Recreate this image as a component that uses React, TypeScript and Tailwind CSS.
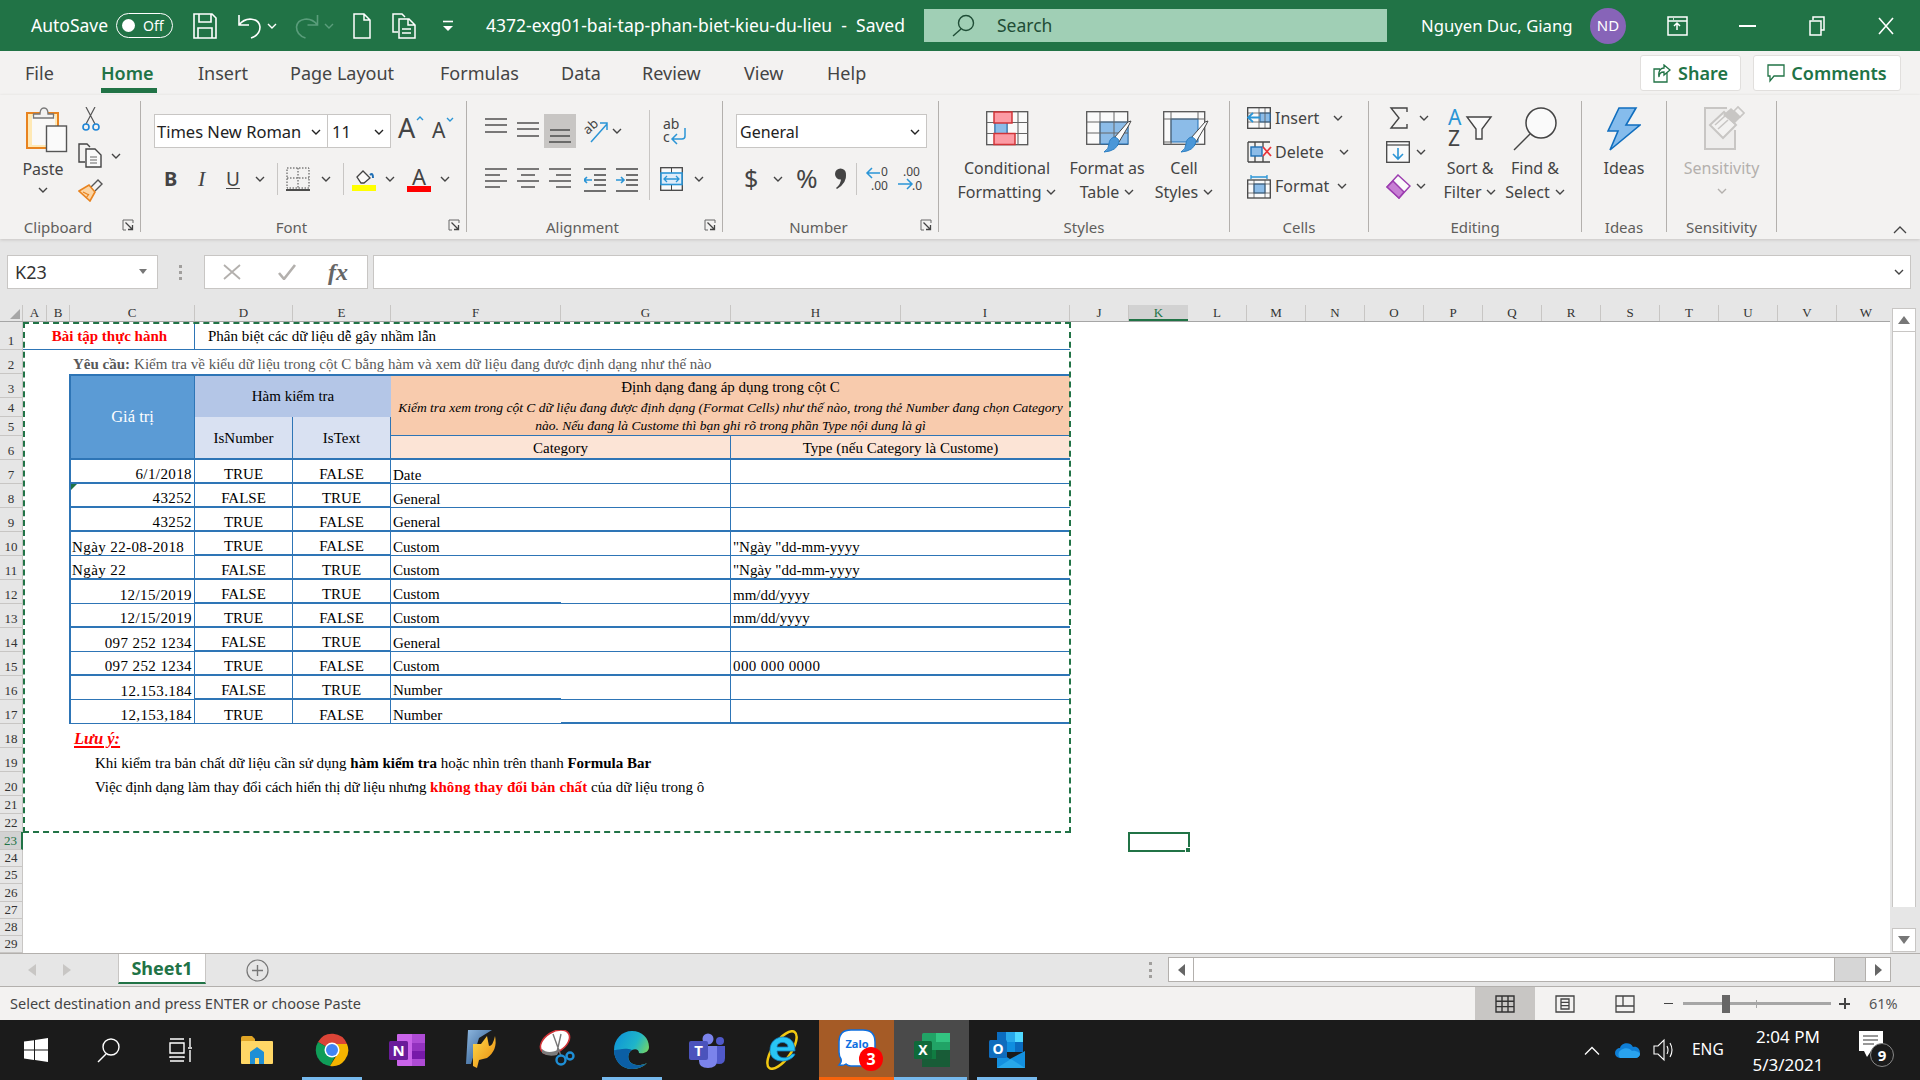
import type { ReactNode } from "react";

const blue = "border-[#2e75b6]";

function Chev({ c = "#444" }: { c?: string }) {
  return (
    <svg width="10" height="6" viewBox="0 0 10 6" className="shrink-0">
      <path d="M1 1l4 4 4-4" fill="none" stroke={c} strokeWidth="1.4" />
    </svg>
  );
}

function Launcher() {
  return (
    <svg width="12" height="12" viewBox="0 0 12 12" className="absolute right-[6px] bottom-[1px]">
      <path d="M11 4V1H1v10h3" fill="none" stroke="#666" strokeWidth="1" />
      <path d="M3.500 3.500l7 7M10.500 6v4.500H6" fill="none" stroke="#444" strokeWidth="1.3" />
    </svg>
  );
}

function Group({ w, label, launcher, children }: { w: string; label: string; launcher?: boolean; children: ReactNode }) {
  return (
    <div className={`${w} relative h-[131px] shrink-0 border-r border-[#b3b0ad]`}>
      {children}
      <div className={`absolute left-0 right-0 top-[115px] text-center text-[15px] leading-[22px] text-[#605e5c] ${launcher ? "pr-[24px]" : ""}`}>{label}</div>
      {launcher && <Launcher />}
    </div>
  );
}

function Lines({ ys, from = [] }: { ys: number[]; from?: number[][] }) {
  return (
    <svg width="22" height="34" viewBox="0 0 22 34" className="shrink-0">
      {ys.map((y, i) => (
        <path key={y} d={`M${from[i] ? from[i][0] : 0} ${y}H${from[i] ? from[i][1] : 22}`} stroke="#444" strokeWidth="1.4" />
      ))}
    </svg>
  );
}

function PasteIcon() {
  return (
    <svg width="42" height="46" viewBox="0 0 42 46">
      <rect x="1" y="6" width="31" height="35" fill="#ffe9b5" stroke="#e8831f" strokeWidth="2" />
      <rect x="6" y="9" width="23" height="29" fill="#faf9f8" />
      <path d="M7.500 11V7H14Q14 1 18 1T22 7h5.500v4z" fill="#f3f2f1" stroke="#777" strokeWidth="1.3" />
      <rect x="20.500" y="19" width="20" height="25.500" fill="#fafafa" stroke="#555" strokeWidth="1.4" />
    </svg>
  );
}
function CutIcon() {
  return (
    <svg width="18" height="24" viewBox="0 0 18 24">
      <path d="M4 0l9 17M13 0L4 17" fill="none" stroke="#555" strokeWidth="1.2" />
      <circle cx="4" cy="20" r="3" fill="none" stroke="#1f86d6" strokeWidth="1.6" />
      <circle cx="14" cy="20" r="3" fill="none" stroke="#1f86d6" strokeWidth="1.6" />
    </svg>
  );
}
function CopyIcon() {
  return (
    <svg width="24" height="25" viewBox="0 0 24 25">
      <path d="M7 19H1V1h8l3 3" fill="none" stroke="#444" strokeWidth="1.4" />
      <path d="M8 6h9l6 6v12H8z" fill="#fafafa" stroke="#444" strokeWidth="1.4" />
      <path d="M12 14h7M12 17h7M12 20h7" stroke="#666" strokeWidth="1.2" />
    </svg>
  );
}
function PainterIcon() {
  return (
    <svg width="25" height="23" viewBox="0 0 25 23">
      <path d="M13 8l7-7 4 4-7 7" fill="#f3f2f1" stroke="#555" strokeWidth="1.4" />
      <path d="M1 12l10-6 6 7-5 9z" fill="#fbd5a5" stroke="#e8831f" strokeWidth="1.6" />
      <path d="M5 13l6 3M8 19l3-4" stroke="#e8831f" strokeWidth="1.2" />
    </svg>
  );
}
function BorderIcon() {
  return (
    <svg width="24" height="24" viewBox="0 0 24 24">
      <path d="M1 1h22v20H1zM12 1v20M1 11h22" fill="none" stroke="#444" strokeWidth="1" strokeDasharray="1.500 1.500" />
      <path d="M0 23h24" stroke="#222" strokeWidth="1.6" />
    </svg>
  );
}
function FillIcon() {
  return (
    <svg width="24" height="24" viewBox="0 0 24 24">
      <path d="M5 10l6-6 7 7-6 5H9z" fill="#faf9f8" stroke="#444" strokeWidth="1.3" />
      <path d="M18 8q3-3 3 3" fill="none" stroke="#1f6fb5" strokeWidth="2" />
      <rect y="18" width="24" height="6" fill="#ffff00" />
    </svg>
  );
}
function OrientIcon() {
  return (
    <svg width="26" height="26" viewBox="0 0 26 26" className="overflow-visible">
      <text x="1" y="13" fontSize="13" fill="#444" transform="rotate(-42 8 10)" fontFamily="Noto Sans">ab</text>
      <path d="M8 24L24 6M17 5h7v7" fill="none" stroke="#2b95d6" strokeWidth="1.5" />
    </svg>
  );
}
function WrapIcon() {
  return (
    <svg width="24" height="30" viewBox="0 0 24 30" className="overflow-visible">
      <text x="0" y="13" fontSize="14" fill="#444" fontFamily="Noto Sans">ab</text>
      <text x="0" y="26" fontSize="14" fill="#444" fontFamily="Noto Sans">c</text>
      <path d="M22 12v8q0 3-3 3H10M14 18l-5 5 5 5" fill="none" stroke="#2b95d6" strokeWidth="1.5" />
    </svg>
  );
}
function IndentIcon({ inc }: { inc?: boolean }) {
  return (
    <svg width="22" height="24" viewBox="0 0 22 24">
      <path d="M0 1h22M10 7h12M10 12h12M10 17h12M0 23h22" stroke="#444" strokeWidth="1.3" />
      <path d={inc ? "M0 12h8M5 9l3 3-3 3" : "M8 12H0M3 9l-3 3 3 3"} fill="none" stroke="#2b95d6" strokeWidth="1.6" />
    </svg>
  );
}
function MergeIcon() {
  return (
    <svg width="23" height="24" viewBox="0 0 23 24">
      <rect x=".7" y=".7" width="21.600" height="22.600" fill="#fafafa" stroke="#444" strokeWidth="1.3" />
      <path d="M11.500 1v5M11.500 18v5" stroke="#444" />
      <rect x="1" y="6" width="21" height="11.500" fill="#deecf9" stroke="#2b95d6" strokeWidth="1.6" />
      <path d="M4 12h15M7 9l-3 3 3 3M16 9l3 3-3 3" fill="none" stroke="#2b95d6" strokeWidth="1.3" />
    </svg>
  );
}
function DecimalIcon({ inc }: { inc?: boolean }) {
  return (
    <svg width="25" height="26" viewBox="0 0 25 26" fontFamily="Noto Sans" fontSize="12" fill="#444" className="overflow-visible">
      {inc ? (
        <>
          <text x="5" y="10">.00</text>
          <text x="14" y="24">.0</text>
          <path d="M0 18h13M9 13l5 5-5 5" fill="none" stroke="#2b95d6" strokeWidth="1.5" />
        </>
      ) : (
        <>
          <text x="15" y="10">0</text>
          <text x="5" y="24">.00</text>
          <path d="M14 7H1M6 2L1 7l5 5" fill="none" stroke="#2b95d6" strokeWidth="1.5" />
        </>
      )}
    </svg>
  );
}
function CondIcon() {
  return (
    <svg width="43" height="36" viewBox="0 0 43 36">
      <rect x=".7" y=".7" width="41" height="33" fill="#fafafa" stroke="#555" strokeWidth="1.3" />
      <path d="M1 11.500h41M1 22.500h41M9 1v33M21 1v33M32 1v33" stroke="#666" strokeWidth="1.1" />
      <rect x="9" y="11.500" width="12" height="11" fill="#8cbce8" stroke="#1f6fb5" strokeWidth="1" />
      <rect x="8" y="1" width="18" height="11" fill="#fc9ba4" stroke="#d13438" strokeWidth="1.5" />
      <rect x="8" y="22.500" width="21" height="11" fill="#fc9ba4" stroke="#d13438" strokeWidth="1.5" />
    </svg>
  );
}
function TableBrush({ cell }: { cell?: boolean }) {
  return (
    <svg width="46" height="42" viewBox="0 0 46 42">
      <rect x=".7" y=".7" width="41" height="32.600" fill="#fafafa" stroke="#555" strokeWidth="1.3" />
      {cell ? (
        <>
          <rect x="8" y="8" width="27" height="23" fill="#8cbce8" stroke="#1f6fb5" />
          <path d="M1 8h41M1 31h8M8 1v33M35 1v7" stroke="#666" />
        </>
      ) : (
        <>
          <rect x="14" y="11" width="28" height="22" fill="#8cbce8" stroke="#1f6fb5" />
          <path d="M1 11h41M1 22h41M14 1v33M28 1v33" stroke="#666" />
        </>
      )}
      <path d="M28 27L42 11l3-1-2 4-10 17z" fill="#fafafa" stroke="#444" />
      <path d="M28 26q5 1 5 5-2 9-15 10 5-3 5-8 0-5 5-7z" fill="#4a97d8" stroke="#2b7fc3" />
    </svg>
  );
}
function InsertIcon() {
  return (
    <svg width="24" height="22" viewBox="0 0 24 22">
      <rect x=".7" y=".7" width="22.600" height="20.600" fill="#fafafa" stroke="#444" strokeWidth="1.3" />
      <rect x="13" y="6" width="10" height="9" fill="#8cbce8" stroke="#1f6fb5" />
      <path d="M1 6h23M1 15h23M12 1v20M18 1v20" stroke="#555" strokeWidth=".8" />
      <path d="M13 10.500H1M6 6l-5 4.500L6 15" fill="none" stroke="#2b95d6" strokeWidth="1.8" />
    </svg>
  );
}
function DeleteIcon() {
  return (
    <svg width="25" height="22" viewBox="0 0 25 22">
      <path d="M1 1h22M1 21h22M1 1v20M8 1v6M8 15v6M16 1v5M16 15v6" fill="none" stroke="#444" strokeWidth="1.3" />
      <rect x="4" y="6" width="11" height="9" fill="#8cbce8" stroke="#1f6fb5" strokeWidth="1.4" />
      <path d="M16 6l8 9M24 6l-8 9" stroke="#e8343a" strokeWidth="1.8" />
    </svg>
  );
}
function FormatIcon() {
  return (
    <svg width="24" height="25" viewBox="0 0 24 25">
      <path d="M4 1v4M20 1v4M4 3h16" fill="none" stroke="#2b95d6" strokeWidth="1.3" />
      <rect x=".7" y="6" width="22.600" height="18" fill="#fafafa" stroke="#444" strokeWidth="1.3" />
      <rect x="7" y="10" width="11" height="9" fill="#8cbce8" stroke="#1f6fb5" />
      <path d="M1 10h22M1 19h22M7 6v18M18 6v18" stroke="#555" strokeWidth=".8" />
    </svg>
  );
}
function SumIcon() {
  return (
    <svg width="20" height="22" viewBox="0 0 20 22">
      <path d="M18 5V1H2l8 10-8 10h16v-4" fill="none" stroke="#444" strokeWidth="1.4" />
    </svg>
  );
}
function FillDownIcon() {
  return (
    <svg width="24" height="22" viewBox="0 0 24 22">
      <rect x=".7" y=".7" width="22.600" height="20.600" fill="#fafafa" stroke="#444" strokeWidth="1.3" />
      <path d="M1 4h22" stroke="#444" strokeWidth="1.2" />
      <path d="M12 7v10M7 13l5 5 5-5" fill="none" stroke="#2b95d6" strokeWidth="1.6" />
    </svg>
  );
}
function EraseIcon() {
  return (
    <svg width="25" height="25" viewBox="0 0 25 25">
      <path d="M12 1l12 11-11 12L1 13z" fill="#fafafa" stroke="#9c3db0" strokeWidth="1.5" />
      <path d="M7 7l11 11-5 6L1 13z" fill="#c77fd4" stroke="#9c3db0" strokeWidth="1.5" />
    </svg>
  );
}
function SortIcon() {
  return (
    <svg width="44" height="42" viewBox="0 0 44 42" fontFamily="Noto Sans" className="overflow-visible">
      <text x="0" y="18" fontSize="21" fill="#2b95d6">A</text>
      <text x="0" y="39" fontSize="21" fill="#444">Z</text>
      <path d="M19 10h24L34 22v10h-6V22z" fill="#fafafa" stroke="#444" strokeWidth="1.4" />
    </svg>
  );
}
function FindIcon() {
  return (
    <svg width="44" height="44" viewBox="0 0 44 44">
      <circle cx="28" cy="16" r="15" fill="#fafafa" stroke="#444" strokeWidth="1.5" />
      <path d="M17 27L1 43" stroke="#444" strokeWidth="1.4" />
    </svg>
  );
}
function BoltIcon() {
  return (
    <svg width="34" height="44" viewBox="0 0 34 44">
      <path d="M12 1h17L19 18h14L3 43l8-19H1z" fill="#85bcec" stroke="#106ebe" strokeWidth="1.6" />
    </svg>
  );
}
function SensIcon() {
  return (
    <svg width="42" height="46" viewBox="0 0 42 46">
      <path d="M24 3H2v41h30V25" fill="#eeedec" stroke="#c8c6c4" strokeWidth="2" />
      <path d="M7 20L21 7l12 13-13 13z" fill="#f3f2f1" stroke="#c8c6c4" strokeWidth="2" />
      <path d="M12 20l10-9M15 24l10-9" stroke="#c8c6c4" strokeWidth="1.6" />
      <path d="M20 10l8-7 10 9-7 7z" fill="#c8c6c4" />
      <path d="M31 6l4-4 6 6-4 4z" fill="#f3f2f1" stroke="#c8c6c4" strokeWidth="1.6" />
    </svg>
  );
}

function Ribbon() {
  return (
    <div className="relative flex h-[144px] bg-[#f3f2f1] pt-[6px] shadow-[0_1px_3px_#c8c6c4]">
      <Group w="w-[141px]" label="Clipboard" launcher>
        <div className="flex">
          <div className="ml-[18px] flex w-[50px] flex-col items-center pt-[6px]">
            <div className="ml-[8px]"><PasteIcon /></div>
            <div className="mt-[4px] text-[16px] leading-[24px] text-[#444]">Paste</div>
            <div className="mt-[6px]"><Chev /></div>
          </div>
          <div className="ml-[10px] pt-[6px]">
            <div className="ml-[4px]"><CutIcon /></div>
            <div className="mt-[12px] flex items-center"><CopyIcon /><div className="ml-[9px]"><Chev /></div></div>
            <div className="mt-[11px]"><PainterIcon /></div>
          </div>
        </div>
      </Group>
      <Group w="w-[326px]" label="Font" launcher>
        <div className="ml-[13px] mt-[13px] flex h-[34px]">
          <div className="flex w-[174px] items-center justify-between border border-[#c8c6c4] bg-white pl-[2px] pr-[6px] pt-[2px] text-[16.5px] text-[#222]">Times New Roman<Chev c="#222" /></div>
          <div className="flex w-[63px] items-center justify-between border border-l-0 border-[#c8c6c4] bg-white pl-[4px] pr-[6px] pt-[2px] text-[16.5px] text-[#222]">11<Chev c="#222" /></div>
          <svg width="26" height="28" viewBox="0 0 26 28" className="ml-[7px] overflow-visible" fontFamily="Noto Sans">
            <text x="0" y="24" fontSize="27" fill="#444">A</text>
            <path d="M19 6l3-3 3 3" fill="none" stroke="#2b95d6" strokeWidth="1.4" />
          </svg>
          <svg width="24" height="28" viewBox="0 0 24 28" className="ml-[8px] overflow-visible" fontFamily="Noto Sans">
            <text x="0" y="24" fontSize="21" fill="#444">A</text>
            <path d="M15 4l3 3 3-3" fill="none" stroke="#2b95d6" strokeWidth="1.4" />
          </svg>
        </div>
        <div className="mt-[13px] flex h-[35px] items-center">
          <div className="ml-[23px] w-[20px] text-[20px] font-bold text-[#444]">B</div>
          <div className="ml-[14px] w-[20px] font-['Liberation_Serif',serif] text-[22px] italic text-[#444]">I</div>
          <div className="ml-[8px] w-[24px] text-[19px] leading-[26px] text-[#444] underline underline-offset-2">U</div>
          <div className="ml-[5px]"><Chev /></div>
          <div className="ml-[12px] h-[32px] w-px bg-[#c8c6c4]" />
          <div className="ml-[8px]"><BorderIcon /></div>
          <div className="ml-[11px]"><Chev /></div>
          <div className="ml-[12px] h-[32px] w-px bg-[#c8c6c4]" />
          <div className="ml-[8px]"><FillIcon /></div>
          <div className="ml-[9px]"><Chev /></div>
          <div className="ml-[12px] flex w-[24px] flex-col items-center">
            <span className="text-[22px] leading-[20px] text-[#444]">A</span>
            <span className="h-[6px] w-[24px] bg-[#ff0000]" />
          </div>
          <div className="ml-[9px]"><Chev /></div>
        </div>
      </Group>
      <Group w="w-[256px]" label="Alignment" launcher>
        <div className="flex">
          <div className="w-[182px] pt-[13px]">
            <div className="flex h-[34px] items-center pl-[18px]">
              <Lines ys={[5, 11, 18]} />
              <div className="ml-[10px]"><Lines ys={[9, 15, 22]} /></div>
              <div className="ml-[5px] flex h-[34px] w-[32px] justify-center bg-[#c8c6c4]"><Lines ys={[16, 22, 28]} from={[[1, 21], [1, 21], [0, 22]]} /></div>
              <div className="ml-[7px]"><OrientIcon /></div>
              <div className="ml-[3px]"><Chev /></div>
            </div>
            <div className="mt-[17px] flex h-[34px] items-start pl-[18px]">
              <Lines ys={[4, 10, 16, 22]} from={[[0, 22], [0, 15], [0, 22], [0, 15]]} />
              <div className="ml-[10px]"><Lines ys={[4, 10, 16, 22]} from={[[0, 22], [4, 18], [0, 22], [4, 18]]} /></div>
              <div className="ml-[10px]"><Lines ys={[4, 10, 16, 22]} from={[[0, 22], [7, 22], [0, 22], [7, 22]]} /></div>
              <div className="ml-[13px] mt-[3px]"><IndentIcon /></div>
              <div className="ml-[10px] mt-[3px]"><IndentIcon inc /></div>
            </div>
          </div>
          <div className="mt-[9px] h-[90px] w-px bg-[#c8c6c4]" />
          <div className="pt-[13px]">
            <div className="ml-[13px] flex h-[34px] items-center"><WrapIcon /></div>
            <div className="ml-[10px] mt-[19px] flex items-center"><MergeIcon /><div className="ml-[11px]"><Chev /></div></div>
          </div>
        </div>
      </Group>
      <Group w="w-[216px]" label="Number" launcher>
        <div className="ml-[13px] mt-[13px] flex h-[34px] w-[191px] items-center justify-between border border-[#c8c6c4] bg-white pl-[3px] pr-[6px] pt-[2px] text-[16px] text-[#222]">General<Chev c="#222" /></div>
        <div className="mt-[13px] flex h-[35px] items-center">
          <div className="ml-[21px] w-[16px] text-[25px] text-[#444]">$</div>
          <div className="ml-[13px]"><Chev /></div>
          <div className="ml-[13px] w-[26px] text-[26px] text-[#444]">%</div>
          <svg width="13" height="22" viewBox="0 0 13 22" className="ml-[12px]">
            <circle cx="6.500" cy="6" r="5.500" fill="#444" />
            <path d="M12 6q1 9-9 15l-1-1q5-4 5-9z" fill="#444" />
          </svg>
          <div className="ml-[9px] h-[32px] w-px bg-[#c8c6c4]" />
          <div className="ml-[9px]"><DecimalIcon /></div>
          <div className="ml-[7px]"><DecimalIcon inc /></div>
        </div>
      </Group>
      <Group w="w-[291px]" label="Styles">
        <div className="flex pl-[9px] pt-[10px] text-[16px] leading-[24px] text-[#444]">
          <div className="flex w-[118px] flex-col items-center">
            <div className="h-[45px]"><CondIcon /></div>
            <div>Conditional</div>
            <div className="flex items-center gap-[5px] whitespace-nowrap">Formatting<Chev /></div>
          </div>
          <div className="flex w-[82px] flex-col items-center">
            <div className="ml-[4px] h-[45px]"><TableBrush /></div>
            <div className="whitespace-nowrap">Format as</div>
            <div className="flex items-center gap-[5px]">Table<Chev /></div>
          </div>
          <div className="flex w-[72px] flex-col items-center">
            <div className="ml-[4px] h-[45px]"><TableBrush cell /></div>
            <div>Cell</div>
            <div className="flex items-center gap-[5px]">Styles<Chev /></div>
          </div>
        </div>
      </Group>
      <Group w="w-[139px]" label="Cells">
        <div className="pl-[17px] text-[16px] text-[#444]">
          <div className="flex h-[34px] items-center"><InsertIcon /><span className="ml-[4px] w-[58px]">Insert</span><Chev /></div>
          <div className="flex h-[34px] items-center"><DeleteIcon /><span className="ml-[3px] w-[64px]">Delete</span><Chev /></div>
          <div className="flex h-[34px] items-center"><FormatIcon /><span className="ml-[4px] w-[62px]">Format</span><Chev /></div>
        </div>
      </Group>
      <Group w="w-[213px]" label="Editing">
        <div className="flex text-[16px] leading-[24px] text-[#444]">
          <div className="w-[63px] pl-[17px]">
            <div className="flex h-[34px] items-center"><div className="ml-[3px] w-[30px]"><SumIcon /></div><Chev /></div>
            <div className="flex h-[34px] items-center"><div className="w-[30px]"><FillDownIcon /></div><Chev /></div>
            <div className="flex h-[34px] items-center"><div className="w-[30px]"><EraseIcon /></div><Chev /></div>
          </div>
          <div className="flex w-[76px] flex-col items-center pt-[6px]">
            <div className="h-[49px]"><SortIcon /></div>
            <div>Sort &amp;</div>
            <div className="flex items-center gap-[5px]">Filter<Chev /></div>
          </div>
          <div className="flex w-[54px] flex-col items-center pt-[6px]">
            <div className="h-[49px]"><FindIcon /></div>
            <div className="whitespace-nowrap">Find &amp;</div>
            <div className="flex items-center gap-[5px]">Select<Chev /></div>
          </div>
        </div>
      </Group>
      <Group w="w-[85px]" label="Ideas">
        <div className="flex flex-col items-center pt-[6px] text-[16px] leading-[24px] text-[#444]">
          <div className="h-[49px]"><BoltIcon /></div>
          <div>Ideas</div>
        </div>
      </Group>
      <Group w="w-[110px]" label="Sensitivity">
        <div className="flex flex-col items-center pt-[4px] text-[16px] leading-[24px] text-[#b3b0ad]">
          <div className="ml-[4px] h-[51px]"><SensIcon /></div>
          <div>Sensitivity</div>
          <div className="mt-[8px]"><Chev c="#b3b0ad" /></div>
        </div>
      </Group>
      <svg width="14" height="8" viewBox="0 0 14 8" className="absolute right-[13px] bottom-[5px]">
        <path d="M1 7l6-6 6 6" fill="none" stroke="#444" strokeWidth="1.3" />
      </svg>
    </div>
  );
}

function TitleBar() {
  return (
    <div className="flex h-[51px] items-center bg-[#217346] text-[17.5px] text-white">
      <div className="ml-[31px] w-[85px]">AutoSave</div>
      <div className="flex h-[25px] w-[57px] items-center rounded-full border-[1.5px] border-white pl-[5px]">
        <span className="h-[13px] w-[13px] rounded-full bg-white" />
        <span className="ml-[8px] text-[14px]">Off</span>
      </div>
      <svg width="24" height="26" viewBox="0 0 24 26" className="ml-[20px]">
        <path d="M1 1h18l4 4v20H1zM6 1v8h12V1M5 25V15h14v10" fill="none" stroke="#fff" strokeWidth="1.6" />
      </svg>
      <svg width="25" height="26" viewBox="0 0 25 26" className="ml-[20px]">
        <path d="M2 2v10h10M2 12C9 3 22 5 23 14c0 5-3 9-9 11" fill="none" stroke="#fff" strokeWidth="1.6" />
      </svg>
      <div className="ml-[5px]"><Chev c="#fff" /></div>
      <svg width="26" height="26" viewBox="0 0 25 26" className="ml-[17px]">
        <path d="M23 2v10H13M23 12C16 3 3 5 2 14c0 5 3 9 9 11" fill="none" stroke="#5a9d7b" strokeWidth="1.6" />
      </svg>
      <div className="ml-[4px]"><Chev c="#5a9d7b" /></div>
      <svg width="18" height="26" viewBox="0 0 18 26" className="ml-[19px]">
        <path d="M1 1h10l6 6v18H1zM11 1v6h6" fill="none" stroke="#fff" strokeWidth="1.5" />
      </svg>
      <svg width="24" height="26" viewBox="0 0 24 26" className="ml-[21px]">
        <path d="M6 19H1V1h9l3 3" fill="none" stroke="#fff" strokeWidth="1.5" />
        <path d="M7 6h10l6 6v13H7zM16 6v6h7M10 16h9M10 20h9" fill="none" stroke="#fff" strokeWidth="1.5" />
      </svg>
      <svg width="12" height="12" viewBox="0 0 12 12" className="ml-[26px]">
        <path d="M1 1.500h10" stroke="#fff" strokeWidth="1.6" />
        <path d="M1 6l5 5 5-5z" fill="#fff" />
      </svg>
      <div className="ml-[32px] w-[438px] whitespace-pre">4372-exg01-bai-tap-phan-biet-kieu-du-lieu  -  Saved</div>
      <div className="flex h-[33px] w-[463px] items-center bg-[#a0cfb5] pl-[28px] text-[#1f4d36]">
        <svg width="23" height="23" viewBox="0 0 23 23">
          <circle cx="14" cy="9" r="7.500" fill="none" stroke="#1f4d36" strokeWidth="1.4" />
          <path d="M9 15l-8 7" stroke="#1f4d36" strokeWidth="1.4" />
        </svg>
        <span className="ml-[22px]">Search</span>
      </div>
      <div className="ml-[34px] w-[152px] whitespace-nowrap text-[16.7px]">Nguyen Duc, Giang</div>
      <div className="ml-[17px] flex h-[36px] w-[36px] items-center justify-center rounded-full bg-[#8764b8] text-[15px]">ND</div>
      <svg width="21" height="20" viewBox="0 0 21 20" className="ml-[41px]">
        <path d="M1 1h19v18H1zM1 5h19M6 3h1M10 14V7M7 10l3-3 3 3" fill="none" stroke="#fff" strokeWidth="1.5" />
      </svg>
      <div className="ml-[51px] h-[2px] w-[17px] bg-white" />
      <svg width="16" height="20" viewBox="0 0 16 20" className="ml-[53px]">
        <path d="M4 4V1h11v13h-3M1 5h11v14H1z" fill="none" stroke="#fff" strokeWidth="1.5" />
      </svg>
      <svg width="16" height="18" viewBox="0 0 16 18" className="ml-[53px]">
        <path d="M1 1l14 16M15 1L1 17" stroke="#fff" strokeWidth="1.6" />
      </svg>
    </div>
  );
}

function TabRow() {
  return (
    <div className="flex h-[44px] items-start bg-[#f3f2f1] text-[18px] text-[#444]">
      <div className="ml-[25px] mt-[9px] w-[31px]">File</div>
      <div className="ml-[45px] flex h-[42px] w-[57px] flex-col justify-between pt-[9px]">
        <span className="font-semibold text-[#217346]">Home</span>
        <span className="h-[5px] w-[56px] bg-[#217346]" />
      </div>
      <div className="ml-[40px] mt-[9px] w-[49px]">Insert</div>
      <div className="ml-[43px] mt-[9px] w-[107px] whitespace-nowrap">Page Layout</div>
      <div className="ml-[43px] mt-[9px] w-[80px]">Formulas</div>
      <div className="ml-[41px] mt-[9px] w-[41px]">Data</div>
      <div className="ml-[40px] mt-[9px] w-[61px]">Review</div>
      <div className="ml-[41px] mt-[9px] w-[42px]">View</div>
      <div className="ml-[41px] mt-[9px] w-[41px]">Help</div>
      <div className="ml-auto mt-[4px] flex h-[36px] w-[101px] items-center justify-center gap-[6px] rounded-[3px] border border-[#e1dfdd] bg-white text-[18px] font-semibold text-[#217346]">
        <svg width="19" height="19" viewBox="0 0 19 19">
          <path d="M14 8v10H1V5h6M11 1l6 5-6 5V8C8 8 6 10 6 13 5 8 7 4 11 4z" fill="none" stroke="#217346" strokeWidth="1.3" />
        </svg>
        Share
      </div>
      <div className="ml-[12px] mr-[19px] mt-[4px] flex h-[36px] w-[148px] items-center justify-center gap-[6px] rounded-[3px] border border-[#e1dfdd] bg-white text-[18px] font-semibold text-[#217346]">
        <svg width="18" height="19" viewBox="0 0 18 19">
          <path d="M1 1h16v11H7l-4 5v-5H1z" fill="none" stroke="#217346" strokeWidth="1.3" />
        </svg>
        Comments
      </div>
    </div>
  );
}

function FormulaBar() {
  return (
    <div className="flex h-[66px] bg-[#e6e6e6] pt-[16px]">
      <div className="ml-[7px] flex h-[34px] w-[151px] items-center justify-between border border-[#c8c6c4] bg-white pl-[7px] pr-[9px] text-[18px] text-[#333]">
        K23
        <svg width="10" height="6" viewBox="0 0 10 6"><path d="M1 0h8L5 5z" fill="#777" /></svg>
      </div>
      <div className="ml-[20px] flex h-[34px] w-[4px] flex-col items-center justify-center gap-[3px]">
        <span className="h-[3px] w-[3px] bg-[#a19f9d]" />
        <span className="h-[3px] w-[3px] bg-[#a19f9d]" />
        <span className="h-[3px] w-[3px] bg-[#a19f9d]" />
      </div>
      <div className="ml-[22px] flex h-[34px] w-[164px] items-center border border-[#c8c6c4] bg-white">
        <svg width="18" height="16" viewBox="0 0 18 16" className="ml-[18px]"><path d="M1 1l16 14M17 1L1 15" stroke="#b3b0ad" strokeWidth="1.8" /></svg>
        <svg width="20" height="16" viewBox="0 0 20 16" className="ml-[36px]"><path d="M2 9l5 6L18 1" fill="none" stroke="#b3b0ad" strokeWidth="2.6" /></svg>
        <span className="ml-[31px] font-['Liberation_Serif',serif] text-[24px] font-bold italic text-[#666]">fx</span>
      </div>
      <div className="ml-[5px] flex h-[34px] w-[1538px] items-center justify-end border border-[#c8c6c4] bg-white pr-[6px]">
        <Chev />
      </div>
    </div>
  );
}

const columns = [
  ["A", "w-[24px]"], ["B", "w-[23px]"], ["C", "w-[125px]"], ["D", "w-[98px]"], ["E", "w-[98px]"],
  ["F", "w-[170px]"], ["G", "w-[170px]"], ["H", "w-[170px]"], ["I", "w-[169px]"],
];
const smallCols = ["J", "K", "L", "M", "N", "O", "P", "Q", "R", "S", "T", "U", "V", "W"];

const rowHeads: [string, string][] = [
  ["1", "h-[28px]"], ["2", "h-[24px]"], ["3", "h-[24px]"], ["4", "h-[19px]"], ["5", "h-[19px]"], ["6", "h-[24px]"],
  ["7", "h-[24px]"], ["8", "h-[24px]"], ["9", "h-[24px]"], ["10", "h-[24px]"], ["11", "h-[24px]"], ["12", "h-[24px]"],
  ["13", "h-[24px]"], ["14", "h-[24px]"], ["15", "h-[24px]"], ["16", "h-[24px]"], ["17", "h-[24px]"], ["18", "h-[24px]"],
  ["19", "h-[24px]"], ["20", "h-[24px]"], ["21", "h-[18px]"], ["22", "h-[18px]"], ["23", "h-[18px]"], ["24", "h-[17px]"],
  ["25", "h-[17px]"], ["26", "h-[18px]"], ["27", "h-[17px]"], ["28", "h-[17px]"], ["29", "h-[17px]"],
];

// value, left aligned, isNumber, isText, category, type, thick bottom edge per column C..I
const rows: [string, boolean, string, string, string, string, string][] = [
  ["6/1/2018", false, "TRUE", "FALSE", "Date", "", "1110000"],
  ["43252", false, "FALSE", "TRUE", "General", "", "1110000"],
  ["43252", false, "TRUE", "FALSE", "General", "", "1111111"],
  ["Ngày 22-08-2018", true, "TRUE", "FALSE", "Custom", "\"Ngày \"dd-mm-yyyy", "0110000"],
  ["Ngày 22", true, "FALSE", "TRUE", "Custom", "\"Ngày \"dd-mm-yyyy", "1111111"],
  ["12/15/2019", false, "FALSE", "TRUE", "Custom", "mm/dd/yyyy", "0111000"],
  ["12/15/2019", false, "TRUE", "FALSE", "Custom", "mm/dd/yyyy", "1111111"],
  ["097 252 1234", false, "FALSE", "TRUE", "General", "", "0110000"],
  ["097 252 1234", false, "TRUE", "FALSE", "Custom", "000 000 0000", "1111111"],
  ["12.153.184", false, "FALSE", "TRUE", "Number", "", "0111000"],
  ["12,153,184", false, "TRUE", "FALSE", "Number", "", "0000111"],
];

function edge(on: string) {
  return on === "1" ? "border-b-2" : "border-b";
}

function DataRow({ r, first }: { r: (typeof rows)[number]; first: boolean }) {
  const [value, left, isNum, isText, cat, type, t] = r;
  const cell = `flex items-end ${blue} leading-[16px]`;
  return (
    <>
      <div className={`${cell} ${edge(t[0])} relative border-l-2 border-r tracking-[0.4px] ${left ? "justify-start pl-[1px]" : "justify-end pr-[2px]"}`}>
        {first && <span className="absolute left-0 top-0 h-0 w-0 border-r-[6px] border-t-[6px] border-r-transparent border-t-[#217346]" />}
        {value}
      </div>
      <div className={`${cell} ${edge(t[1])} justify-center border-r`}>{isNum}</div>
      <div className={`${cell} ${edge(t[2])} justify-center border-r`}>{isText}</div>
      <div className={`${cell} ${edge(t[3])} pl-[2px]`}>{cat}</div>
      <div className={`${cell} ${edge(t[4])} border-r`} />
      <div className={`${cell} ${edge(t[5])} pl-[2px] ${/^\d/.test(type) ? "tracking-[0.4px]" : ""}`}>{type}</div>
      <div className={`${cell} ${edge(t[6])}`} />
    </>
  );
}

function Sheet() {
  return (
    <div className="flex h-[648px] font-['Liberation_Serif',serif] text-black">
      <div className="relative min-w-0 flex-1 overflow-hidden">
        <div className="flex h-[17px] border-b border-[#a6a6a6] bg-[#e6e6e6] text-[13px] leading-[16px] text-[#333]">
          <div className="flex w-[23px] shrink-0 items-end justify-end border-r border-[#c8c6c4] pb-[2px] pr-[2px]">
            <span className="h-0 w-0 border-b-[10px] border-l-[10px] border-b-[#a6a6a6] border-l-transparent" />
          </div>
          {columns.map(([c, w]) => (
            <div key={c} className={`${w} shrink-0 border-r border-[#c8c6c4] text-center`}>{c}</div>
          ))}
          {smallCols.map((c) => (
            <div
              key={c}
              className={c === "K" ? "w-[59px] shrink-0 border-b-2 border-[#217346] bg-[#d2d2d2] text-center text-[#217346]" : "w-[59px] shrink-0 border-r border-[#c8c6c4] text-center"}
            >
              {c}
            </div>
          ))}
        </div>
        <div className="flex">
          <div className="w-[23px] shrink-0 bg-[#e6e6e6] text-[13px] text-[#333]">
            {rowHeads.map(([n, h]) => (
              <div
                key={n}
                className={`${h} flex items-end justify-center border-b border-r border-[#c8c6c4] leading-[16px] ${n === "23" ? "border-r-2 border-r-[#217346] bg-[#d2d2d2] text-[#217346]" : ""}`}
              >
                {n}
              </div>
            ))}
          </div>
          <div className="relative h-[631px] flex-1 bg-white text-[15px]">
            <div className="w-[1047px]">
              <div className={`flex h-[28px] border-b pt-[2px] ${blue}`}>
                <div className={`-mt-[2px] flex w-[172px] items-center justify-center border-r pt-[2px] ${blue} pl-[2px] font-bold text-[#ff0000]`}>Bài tập thực hành</div>
                <div className="flex items-center pl-[13px]">Phân biệt các dữ liệu dễ gây nhầm lẫn</div>
              </div>
              <div className="flex h-[24px] items-end pl-[50px] leading-[20px] text-[#595959]">
                <span className="mr-[4px] font-bold">Yêu cầu:</span>Kiểm tra về kiểu dữ liệu trong cột C bằng hàm và xem dữ liệu đang được định dạng như thế nào
              </div>
              <div className="ml-[46px] grid grid-cols-[126px_98px_98px_170px_170px_170px_169px] grid-rows-[24px_19px_19px_24px_repeat(11,24px)]">
                <div className={`row-span-4 flex items-center justify-center border-y-2 border-l-2 border-r ${blue} bg-[#5b9bd5] text-[16.5px] text-white`}>Giá trị</div>
                <div className={`col-span-2 row-span-2 flex items-center justify-center border-t-2 ${blue} bg-[#b4c6e7]`}>Hàm kiểm tra</div>
                <div className={`col-span-4 flex items-end justify-center border-t-2 ${blue} bg-[#f8cbad] leading-[22px]`}>Định dạng đang áp dụng trong cột C</div>
                <div className={`col-span-4 row-span-2 border-b ${blue} bg-[#f8cbad] pt-[1px] text-center text-[13.5px] italic leading-[18px]`}>
                  Kiểm tra xem trong cột C dữ liệu đang được định dạng (Format Cells) như thế nào, trong thẻ Number đang chọn Category<br />
                  nào. Nếu đang là Custome thì bạn ghi rõ trong phần Type nội dung là gì
                </div>
                <div className={`row-span-2 flex items-center justify-center border-b-2 border-r pt-[2px] ${blue} bg-[#d9e1f2]`}>IsNumber</div>
                <div className={`row-span-2 flex items-center justify-center border-b-2 border-r pt-[2px] ${blue} bg-[#d9e1f2]`}>IsText</div>
                <div className={`col-span-2 flex items-center justify-center border-b-2 border-r pt-[2px] ${blue} bg-[#fce4d6]`}>Category</div>
                <div className={`col-span-2 flex items-center justify-center border-b-2 pt-[2px] ${blue} bg-[#fce4d6]`}>Type (nếu Category là Custome)</div>
                {rows.map((r, i) => (
                  <DataRow key={i} r={r} first={i === 1} />
                ))}
              </div>
              <div className="flex h-[24px] items-end pl-[51px] text-[16.5px] font-bold italic leading-[18px] text-[#ff0000]">
                <span className="underline decoration-2 underline-offset-2">Lưu ý:</span>
              </div>
              <div className="flex h-[24px] items-end whitespace-pre pl-[72px] leading-[18px]">
                <span>Khi kiểm tra bản chất dữ liệu cần sử dụng <b>hàm kiểm tra</b> hoặc nhìn trên thanh <b>Formula Bar</b></span>
              </div>
              <div className="flex h-[24px] items-end whitespace-pre pl-[72px] leading-[18px]">
                <span><span className="tracking-[-0.11px]">Việc định dạng làm thay đổi cách hiển thị dữ liệu nhưng </span><b className="tracking-[0.1px] text-[#ff0000]">không thay đổi bản chất</b> của dữ liệu trong ô</span>
              </div>
            </div>
            <div className="pointer-events-none absolute left-0 top-0 h-[511px] w-[1048px] border-2 border-dashed border-[#217346]" />
            <div className="pointer-events-none absolute left-[1105px] top-[510px] h-[20px] w-[62px] border-2 border-[#217346]">
              <span className="absolute -bottom-[3px] -right-[3px] h-[6px] w-[6px] border border-white bg-[#217346]" />
            </div>
          </div>
        </div>
      </div>
      <div className="flex w-[30px] shrink-0 flex-col bg-[#e6e6e6] pl-[2px] pr-[4px] pt-[3px]">
        <div className="flex h-[24px] items-center justify-center border border-[#c8c6c4] bg-white">
          <svg width="12" height="8" viewBox="0 0 12 8"><path d="M6 0l6 8H0z" fill="#777" /></svg>
        </div>
        <div className="h-[575px] border-x border-[#c8c6c4] bg-white" />
        <div className="h-[24px] flex-1" />
        <div className="mb-[1px] flex h-[24px] items-center justify-center border border-[#c8c6c4] bg-white">
          <svg width="12" height="8" viewBox="0 0 12 8"><path d="M6 8l6-8H0z" fill="#777" /></svg>
        </div>
      </div>
    </div>
  );
}

function SheetTabs() {
  return (
    <div className="flex h-[34px] items-start border-y border-[#b3b0ad] bg-[#e6e6e6]">
      <svg width="8" height="12" viewBox="0 0 8 12" className="ml-[28px] mt-[10px]"><path d="M8 0L0 6l8 6z" fill="#c8c6c4" /></svg>
      <svg width="8" height="12" viewBox="0 0 8 12" className="ml-[27px] mt-[10px]"><path d="M0 0l8 6-8 6z" fill="#c8c6c4" /></svg>
      <div className="ml-[47px] flex h-[30px] w-[88px] items-center justify-center border-b-2 border-x border-x-[#c8c6c4] border-b-[#217346] bg-white text-[18px] font-bold text-[#217346]">Sheet1</div>
      <svg width="23" height="23" viewBox="0 0 23 23" className="ml-[40px] mt-[5px]">
        <circle cx="11.500" cy="11.500" r="10.500" fill="none" stroke="#777" strokeWidth="1.2" />
        <path d="M11.500 6v11M6 11.500h11" stroke="#777" strokeWidth="1.4" />
      </svg>
      <div className="ml-[880px] mt-[8px] flex h-[16px] w-[4px] flex-col justify-between">
        <span className="h-[3px] w-[3px] bg-[#a19f9d]" />
        <span className="h-[3px] w-[3px] bg-[#a19f9d]" />
        <span className="h-[3px] w-[3px] bg-[#a19f9d]" />
      </div>
      <div className="ml-[15px] mt-[3px] flex h-[25px] w-[723px] border border-[#b3b0ad] bg-[#d6d6d6]">
        <div className="flex w-[25px] items-center justify-center border-r border-[#b3b0ad] bg-white">
          <svg width="7" height="12" viewBox="0 0 7 12"><path d="M7 0L0 6l7 6z" fill="#666" /></svg>
        </div>
        <div className="w-[641px] border-r border-[#b3b0ad] bg-white" />
        <div className="flex-1" />
        <div className="flex w-[25px] items-center justify-center border-l border-[#b3b0ad] bg-white">
          <svg width="7" height="12" viewBox="0 0 7 12"><path d="M0 0l7 6-7 6z" fill="#666" /></svg>
        </div>
      </div>
    </div>
  );
}

function StatusBar() {
  return (
    <div className="flex h-[33px] items-center bg-[#f3f2f1] text-[14.5px] text-[#444]">
      <div className="ml-[10px] w-[1465px] whitespace-nowrap">Select destination and press ENTER or choose Paste</div>
      <div className="flex h-[33px] w-[60px] items-center justify-center bg-[#c8c6c4]">
        <svg width="20" height="18" viewBox="0 0 20 18"><path d="M1 1h18v16H1zM1 6.300h18M1 11.600h18M7 1v16M13 1v16" fill="none" stroke="#333" strokeWidth="1.4" /></svg>
      </div>
      <div className="flex w-[60px] justify-center">
        <svg width="20" height="18" viewBox="0 0 20 18"><path d="M1 1h18v16H1zM6 4h8v10H6zM6 7.300h8M6 10.600h8" fill="none" stroke="#444" strokeWidth="1.3" /></svg>
      </div>
      <div className="flex w-[60px] justify-center">
        <svg width="20" height="18" viewBox="0 0 20 18"><path d="M1 1h18v16H1zM1 11h18M8 1v10" fill="none" stroke="#444" strokeWidth="1.3" /></svg>
      </div>
      <div className="ml-[9px] h-[1.500px] w-[9px] bg-[#444]" />
      <div className="relative ml-[10px] flex h-[18px] w-[148px] items-center">
        <div className="h-[3px] w-full bg-[#a6a6a6]" />
        <div className="absolute left-[73px] top-[5px] h-[8px] w-px bg-[#a6a6a6]" />
        <div className="absolute left-[39px] top-0 h-[18px] w-[8px] bg-[#666]" />
      </div>
      <div className="relative ml-[8px] h-[11px] w-[11px]">
        <div className="absolute left-0 top-[5px] h-[1.500px] w-[11px] bg-[#444]" />
        <div className="absolute left-[5px] top-0 h-[11px] w-[1.500px] bg-[#444]" />
      </div>
      <div className="ml-[19px] text-[#555]">61%</div>
    </div>
  );
}

function Slot({ bg, children }: { bg?: string; children: ReactNode }) {
  return <div className={`relative flex h-[60px] w-[75px] items-center justify-center ${bg ?? ""}`}>{children}</div>;
}

function Taskbar() {
  return (
    <div className="flex h-[60px] items-center bg-[#1b1b1b] text-white">
      <div className="flex w-[72px] justify-center">
        <svg width="24" height="24" viewBox="0 0 24 24" fill="#fff">
          <path d="M0 3.500l10-1.300v9.300H0zM11 2l13-2v11.500H11zM0 12.500h10V22L0 20.500zM11 12.500h13V24l-13-2z" />
        </svg>
      </div>
      <div className="flex w-[72px] justify-center">
        <svg width="24" height="26" viewBox="0 0 24 26">
          <circle cx="15" cy="10" r="8" fill="none" stroke="#fff" strokeWidth="1.4" />
          <path d="M10 17l-8 8" stroke="#fff" strokeWidth="1.4" />
        </svg>
      </div>
      <div className="flex w-[75px] justify-center">
        <svg width="25" height="24" viewBox="0 0 25 24">
          <path d="M1 1h14M1 23h14M1 20v-1h14v1M1 5h14v10H1zM21 0v9M21 12v12M19 10h4" fill="none" stroke="#fff" strokeWidth="1.4" />
        </svg>
      </div>
      <Slot>
        <svg width="32" height="30" viewBox="0 0 32 30">
          <path d="M0 3q0-2 2-2h9l3 3h0v3H0z" fill="#e0a526" />
          <rect y="6" width="32" height="23" rx="1" fill="#ffd766" />
          <path d="M9 17l7-5 7 5v12h-5v-6h-4v6H9z" fill="#1f8fd6" />
        </svg>
      </Slot>
      <Slot>
        <svg width="34" height="34" viewBox="0 0 34 34">
          <path d="M17 17L3 9A16 16 0 0 1 32 11H17z" fill="#db4437" />
          <path d="M17 17L3 9A16 16 0 0 0 15 33l7-13z" fill="#0f9d58" />
          <path d="M17 11h15a16 16 0 0 1-17 22l8-13z" fill="#f4b400" />
          <circle cx="17" cy="17" r="7.500" fill="#fff" />
          <circle cx="17" cy="17" r="6" fill="#4285f4" />
        </svg>
        <span className="absolute bottom-0 left-[8px] h-[3px] w-[60px] bg-[#76b9ed]" />
      </Slot>
      <Slot>
        <svg width="36" height="36" viewBox="0 0 36 36">
          <rect x="8" y="2" width="28" height="32" rx="1" fill="#ca64ea" />
          <rect x="23" y="2" width="13" height="32" fill="#ae4bd5" />
          <rect x="23" y="11" width="13" height="8" fill="#9332bf" />
          <rect x="23" y="19" width="13" height="8" fill="#7719aa" />
          <rect x="0" y="9" width="19" height="19" rx="1.500" fill="#6a1b9a" />
          <text x="9.500" y="24" textAnchor="middle" fontSize="15" fontWeight="700" fill="#fff" fontFamily="Noto Sans">N</text>
        </svg>
      </Slot>
      <Slot>
        <svg width="34" height="40" viewBox="0 0 34 40">
          <defs>
            <linearGradient id="ya" x1="0" y1="0" x2="1" y2="1"><stop offset="0" stopColor="#ffd84a" /><stop offset="1" stopColor="#e88a0c" /></linearGradient>
            <linearGradient id="yb" x1="0" y1="0" x2="1" y2="1"><stop offset="0" stopColor="#8fb8e0" /><stop offset="1" stopColor="#1d4b82" /></linearGradient>
          </defs>
          <path d="M3 0h24l-13 8-8 26H1z" fill="url(#yb)" />
          <path d="M8 14l8 0 6-8 2 10q4 0 6-10 3 14-8 22l-8 2-2 8-4-2z" fill="url(#ya)" />
        </svg>
      </Slot>
      <Slot>
        <svg width="36" height="40" viewBox="0 0 36 40">
          <ellipse cx="16" cy="12" rx="16" ry="10" transform="rotate(-32 16 12)" fill="#fff" stroke="#d13438" strokeWidth="1.6" />
          <path d="M3 19q6 6 18 0l-3 6q-9 2-15-2z" fill="#7c7c7c" />
          <path d="M14 4l8 22M22 4l-4 18" stroke="#777" strokeWidth="1.4" />
          <circle cx="22" cy="30" r="4.500" fill="none" stroke="#1f8fd6" strokeWidth="2.400" />
          <circle cx="31" cy="26" r="3.500" fill="none" stroke="#1f8fd6" strokeWidth="2.400" />
        </svg>
      </Slot>
      <Slot>
        <svg width="36" height="38" viewBox="0 0 36 38">
          <defs>
            <linearGradient id="ea" x1="0" y1="0" x2="1" y2=".6"><stop offset="0" stopColor="#0c8ed9" /><stop offset=".6" stopColor="#1fb5c9" /><stop offset="1" stopColor="#7fd858" /></linearGradient>
          </defs>
          <path d="M18 0C8 0 0 8 0 19c0 11 8 19 18 19 6 0 11-2 15-6-8 4-16 2-18-3-2-5 1-9 3-10 4-2 7 0 7 3 5 1 10-1 10-6C35 7 28 0 18 0z" fill="url(#ea)" />
          <path d="M0 19c0 11 8 19 18 19 6 0 11-2 15-6-8 4-16 2-18-3-2-5 1-9 3-10-8-3-16 1-18 0z" fill="#0b5fa5" />
        </svg>
        <span className="absolute bottom-0 left-[8px] h-[3px] w-[60px] bg-[#76b9ed]" />
      </Slot>
      <Slot>
        <svg width="36" height="36" viewBox="0 0 36 36">
          <circle cx="19" cy="7" r="5.500" fill="#7b83eb" />
          <circle cx="31" cy="9" r="4" fill="#5059c9" />
          <path d="M25 14h11v12q0 6-6 6-5 0-5-4z" fill="#5059c9" />
          <path d="M10 14h18v15q0 7-9 7-9 0-9-7z" fill="#7b83eb" />
          <rect x="0" y="9" width="19" height="19" rx="2" fill="#4b53bc" />
          <text x="9.500" y="24" textAnchor="middle" fontSize="15" fontWeight="700" fill="#fff" fontFamily="Noto Sans">T</text>
        </svg>
      </Slot>
      <Slot>
        <svg width="34" height="40" viewBox="0 0 34 40">
          <ellipse cx="17" cy="20" rx="9" ry="22" transform="rotate(35 17 20)" fill="none" stroke="#f2c811" strokeWidth="2.500" />
          <path d="M5 20C5 12 11 7 18 7s12 5 12 14H12c0 8 11 9 15 3h3c-3 9-25 11-25-4zM12 17h11c0-6-11-6-11 0z" fill="#29c5f5" stroke="#0f7fc4" strokeWidth=".8" />
        </svg>
      </Slot>
      <Slot bg="bg-[#a55b26]">
        <svg width="36" height="40" viewBox="0 0 36 40" className="overflow-visible">
          <path d="M12 0h12q12 0 12 12v12q0 12-12 12H12q-3 0-5-2-3 2-7 1 3-3 2-6-2-3-2-7V12Q0 0 12 0z" fill="#fff" stroke="#0d6fe0" strokeWidth="1.500" />
          <text x="18" y="18" textAnchor="middle" fontSize="11" fontWeight="700" fill="#0d6fe0" fontFamily="Noto Sans">Zalo</text>
        </svg>
        <span className="absolute left-[40px] top-[27px] flex h-[24px] w-[24px] items-center justify-center rounded-full bg-[#ff0000] text-[16px] font-bold">3</span>
        <span className="absolute bottom-0 left-0 h-[3px] w-full bg-[#f7630c]" />
      </Slot>
      <Slot bg="bg-[#4a4a4a]">
        <svg width="36" height="36" viewBox="0 0 36 36">
          <rect x="8" y="1" width="28" height="34" rx="1.500" fill="#21a366" />
          <rect x="22" y="1" width="14" height="9" fill="#33c481" />
          <rect x="8" y="18" width="14" height="9" fill="#107c41" />
          <rect x="22" y="18" width="14" height="9" fill="#185c37" />
          <rect x="8" y="27" width="28" height="8" fill="#185c37" />
          <rect x="0" y="9" width="18" height="18" rx="1.500" fill="#0f6a3a" />
          <text x="9" y="23" textAnchor="middle" fontSize="14" fontWeight="700" fill="#fff" fontFamily="Noto Sans">X</text>
        </svg>
        <span className="absolute bottom-0 left-0 h-[3px] w-[73px] bg-[#76b9ed]" />
      </Slot>
      <Slot>
        <svg width="36" height="38" viewBox="0 0 36 38">
          <rect x="8" y="1" width="26" height="20" fill="#0a6cc0" />
          <rect x="17" y="1" width="9" height="10" fill="#28a8ea" />
          <rect x="26" y="1" width="8" height="10" fill="#50d9ff" />
          <rect x="17" y="11" width="9" height="10" fill="#0f8fe0" />
          <path d="M8 20l13 8 15-8v17H8z" fill="#1490df" />
          <path d="M8 37l14-9 14 9z" fill="#28a8ea" />
          <rect x="0" y="9" width="18" height="18" rx="1.500" fill="#0f6cbd" />
          <text x="9" y="23" textAnchor="middle" fontSize="14" fontWeight="700" fill="#fff" fontFamily="Noto Sans">O</text>
        </svg>
        <span className="absolute bottom-0 left-[8px] h-[3px] w-[60px] bg-[#76b9ed]" />
      </Slot>
      <svg width="16" height="9" viewBox="0 0 16 9" className="ml-[540px]"><path d="M1 8.500l7-7 7 7" fill="none" stroke="#fff" strokeWidth="1.3" /></svg>
      <svg width="25" height="18" viewBox="0 0 25 18" className="ml-[15px]">
        <path d="M5 17a5 5 0 0 1 0-10c1-5 10-7 13-1 4-1 7 2 7 6 0 3-2 5-5 5z" fill="#0f7fd6" />
        <path d="M5 17a5 5 0 0 1 1-8c4-3 9-2 11 1 4-1 8 2 8 3 0 2-2 4-5 4z" fill="#29a3ef" />
      </svg>
      <svg width="22" height="24" viewBox="0 0 22 24" className="ml-[13px]">
        <path d="M1 8h4l6-6v20l-6-6H1zM14 8q2 4 0 8M17 5q4 7 0 14" fill="none" stroke="#fff" strokeWidth="1.1" />
      </svg>
      <div className="ml-[17px] w-[34px] whitespace-nowrap text-[15.5px]">ENG</div>
      <div className="ml-[1px] flex w-[122px] flex-col items-center pt-[2px] text-[17px] leading-[28px]">
        <span>2:04 PM</span>
        <span>5/3/2021</span>
      </div>
      <div className="relative ml-[10px] h-[40px] w-[36px]">
        <svg width="24" height="28" viewBox="0 0 24 28" className="absolute left-0 top-[1px]">
          <path d="M0 0h24v20H12l-4 6-3-6H0z" fill="#fff" />
          <path d="M4 5h15M4 9h15M4 13h11" stroke="#333" strokeWidth="1.2" />
        </svg>
        <span className="absolute left-[11px] top-[13px] flex h-[24px] w-[24px] items-center justify-center rounded-full border border-[#888] bg-[#1b1b1b] text-[15px] font-bold">9</span>
      </div>
    </div>
  );
}

export default function App() {
  return (
    <div className="flex h-[1080px] w-[1920px] flex-col overflow-hidden font-['Noto_Sans',sans-serif]">
      <TitleBar />
      <TabRow />
      <Ribbon />
      <FormulaBar />
      <Sheet />
      <SheetTabs />
      <StatusBar />
      <Taskbar />
    </div>
  );
}
